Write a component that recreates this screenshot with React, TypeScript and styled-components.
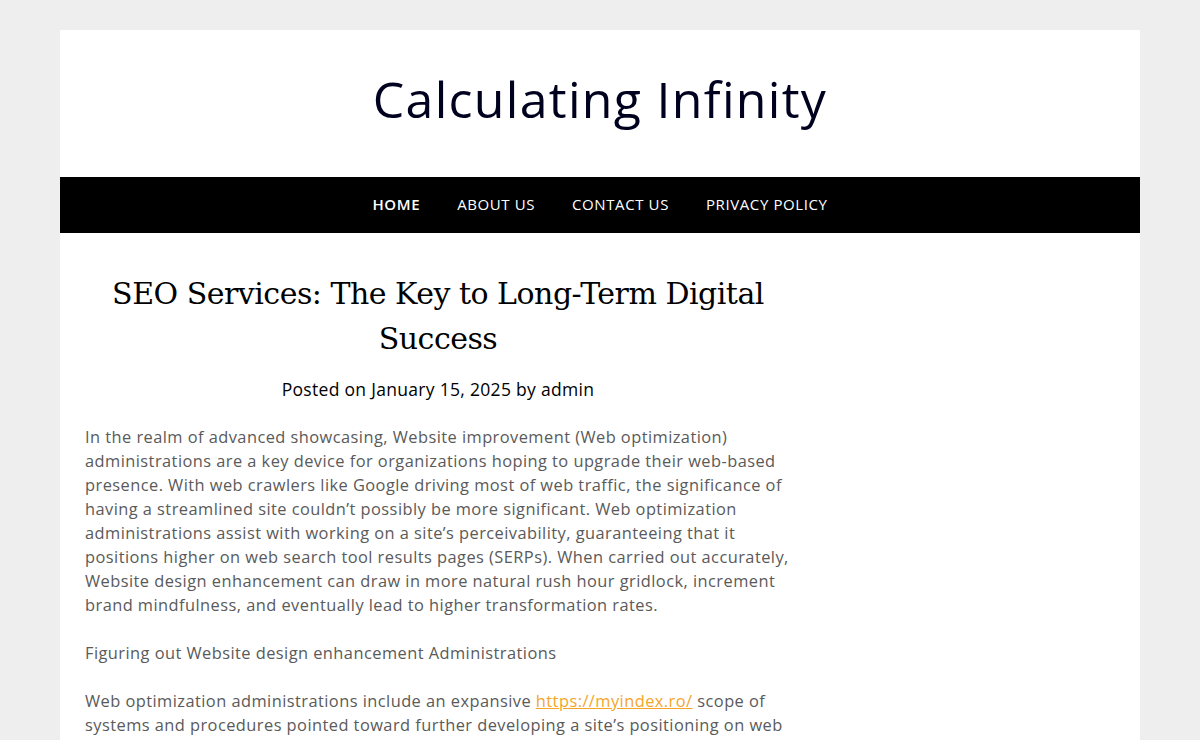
import React from "react";
import styled, { createGlobalStyle } from "styled-components";

const GlobalStyle = createGlobalStyle`
  html, body {
    margin: 0;
    padding: 0;
    background: #eeeeee;
  }
  body {
    font-family: "Open Sans", "Noto Sans", sans-serif;
  }
`;

const Page = styled.div`
  padding-top: 30px;
  display: flex;
  justify-content: center;
`;

const Wrapper = styled.div`
  width: 1080px;
  background: #ffffff;
  display: flex;
  flex-flow: column nowrap;
`;

const Header = styled.header`
  height: 147px;
  display: flex;
  align-items: center;
  justify-content: center;
`;

const SiteTitle = styled.a`
  font-family: "Open Sans", sans-serif;
  font-size: 50px;
  font-weight: 500;
  letter-spacing: 1.3px;
  color: #00001f;
  text-decoration: none;
  margin-top: -10px;
`;

const Nav = styled.nav`
  height: 56px;
  background: #000000;
  display: flex;
  align-items: center;
  justify-content: center;
`;

const Menu = styled.ul`
  list-style: none;
  display: flex;
  gap: 37px;
  margin: -2px 0 0;
  padding: 0;
`;

const MenuItem = styled.li<{ active?: boolean }>`
  font-family: "Open Sans", sans-serif;
  font-size: 15px;
  font-weight: ${(p) => (p.active ? 600 : 500)};
  letter-spacing: 0.6px;
  color: #ffffff;
  text-transform: uppercase;
  cursor: pointer;
`;

const Body = styled.div`
  display: flex;
  flex-flow: row nowrap;
  padding: 38px 25px 0;
  gap: 40px;
`;

const Main = styled.main`
  width: 712px;
  display: flex;
  flex-flow: column nowrap;
`;

const Sidebar = styled.aside`
  flex: 1;
`;

const PostTitle = styled.h1`
  font-family: "DejaVu Serif", "Liberation Serif", serif;
  font-size: 30px;
  font-weight: 400;
  line-height: 45px;
  letter-spacing: -0.5px;
  color: #000000;
  text-align: center;
  margin: 0 6px 0 0;
`;

const Meta = styled.div`
  font-family: "Open Sans", sans-serif;
  font-size: 17.5px;
  letter-spacing: 0.3px;
  color: #000000;
  text-align: center;
  margin: 16px 6px 24px 0;
`;

const Paragraph = styled.p`
  font-family: "Open Sans", sans-serif;
  font-size: 16.4px;
  line-height: 24px;
  letter-spacing: 0.45px;
  color: #5a5a5a;
  margin: 0 0 24px;
`;

const Line = styled.span`
  display: block;
  white-space: nowrap;
`;

const Link = styled.a`
  color: #f4a529;
  text-decoration: underline;
`;

const introLines: string[] = [
  "In the realm of advanced showcasing, Website improvement (Web optimization)",
  "administrations are a key device for organizations hoping to upgrade their web-based",
  "presence. With web crawlers like Google driving most of web traffic, the significance of",
  "having a streamlined site couldn’t possibly be more significant. Web optimization",
  "administrations assist with working on a site’s perceivability, guaranteeing that it",
  "positions higher on web search tool results pages (SERPs). When carried out accurately,",
  "Website design enhancement can draw in more natural rush hour gridlock, increment",
  "brand mindfulness, and eventually lead to higher transformation rates.",
];

export default function App() {
  return (
    <>
      <GlobalStyle />
      <Page>
        <Wrapper>
          <Header>
            <SiteTitle href="#">Calculating Infinity</SiteTitle>
          </Header>
          <Nav>
            <Menu>
              <MenuItem active>Home</MenuItem>
              <MenuItem>About Us</MenuItem>
              <MenuItem>Contact Us</MenuItem>
              <MenuItem>Privacy Policy</MenuItem>
            </Menu>
          </Nav>
          <Body>
            <Main>
              <PostTitle>SEO Services: The Key to Long-Term Digital Success</PostTitle>
              <Meta>Posted on January 15, 2025 by admin</Meta>
              <Paragraph>
                {introLines.map((line) => (
                  <Line key={line}>{line}</Line>
                ))}
              </Paragraph>
              <Paragraph>Figuring out Website design enhancement Administrations</Paragraph>
              <Paragraph>
                <Line>
                  Web optimization administrations include an expansive{" "}
                  <Link href="#">https://myindex.ro/</Link> scope of
                </Line>
                <Line>systems and procedures pointed toward further developing a site’s positioning on web</Line>
                <Line>search tool results pages and drawing in more qualified visitors to it.</Line>
              </Paragraph>
            </Main>
            <Sidebar />
          </Body>
        </Wrapper>
      </Page>
    </>
  );
}
